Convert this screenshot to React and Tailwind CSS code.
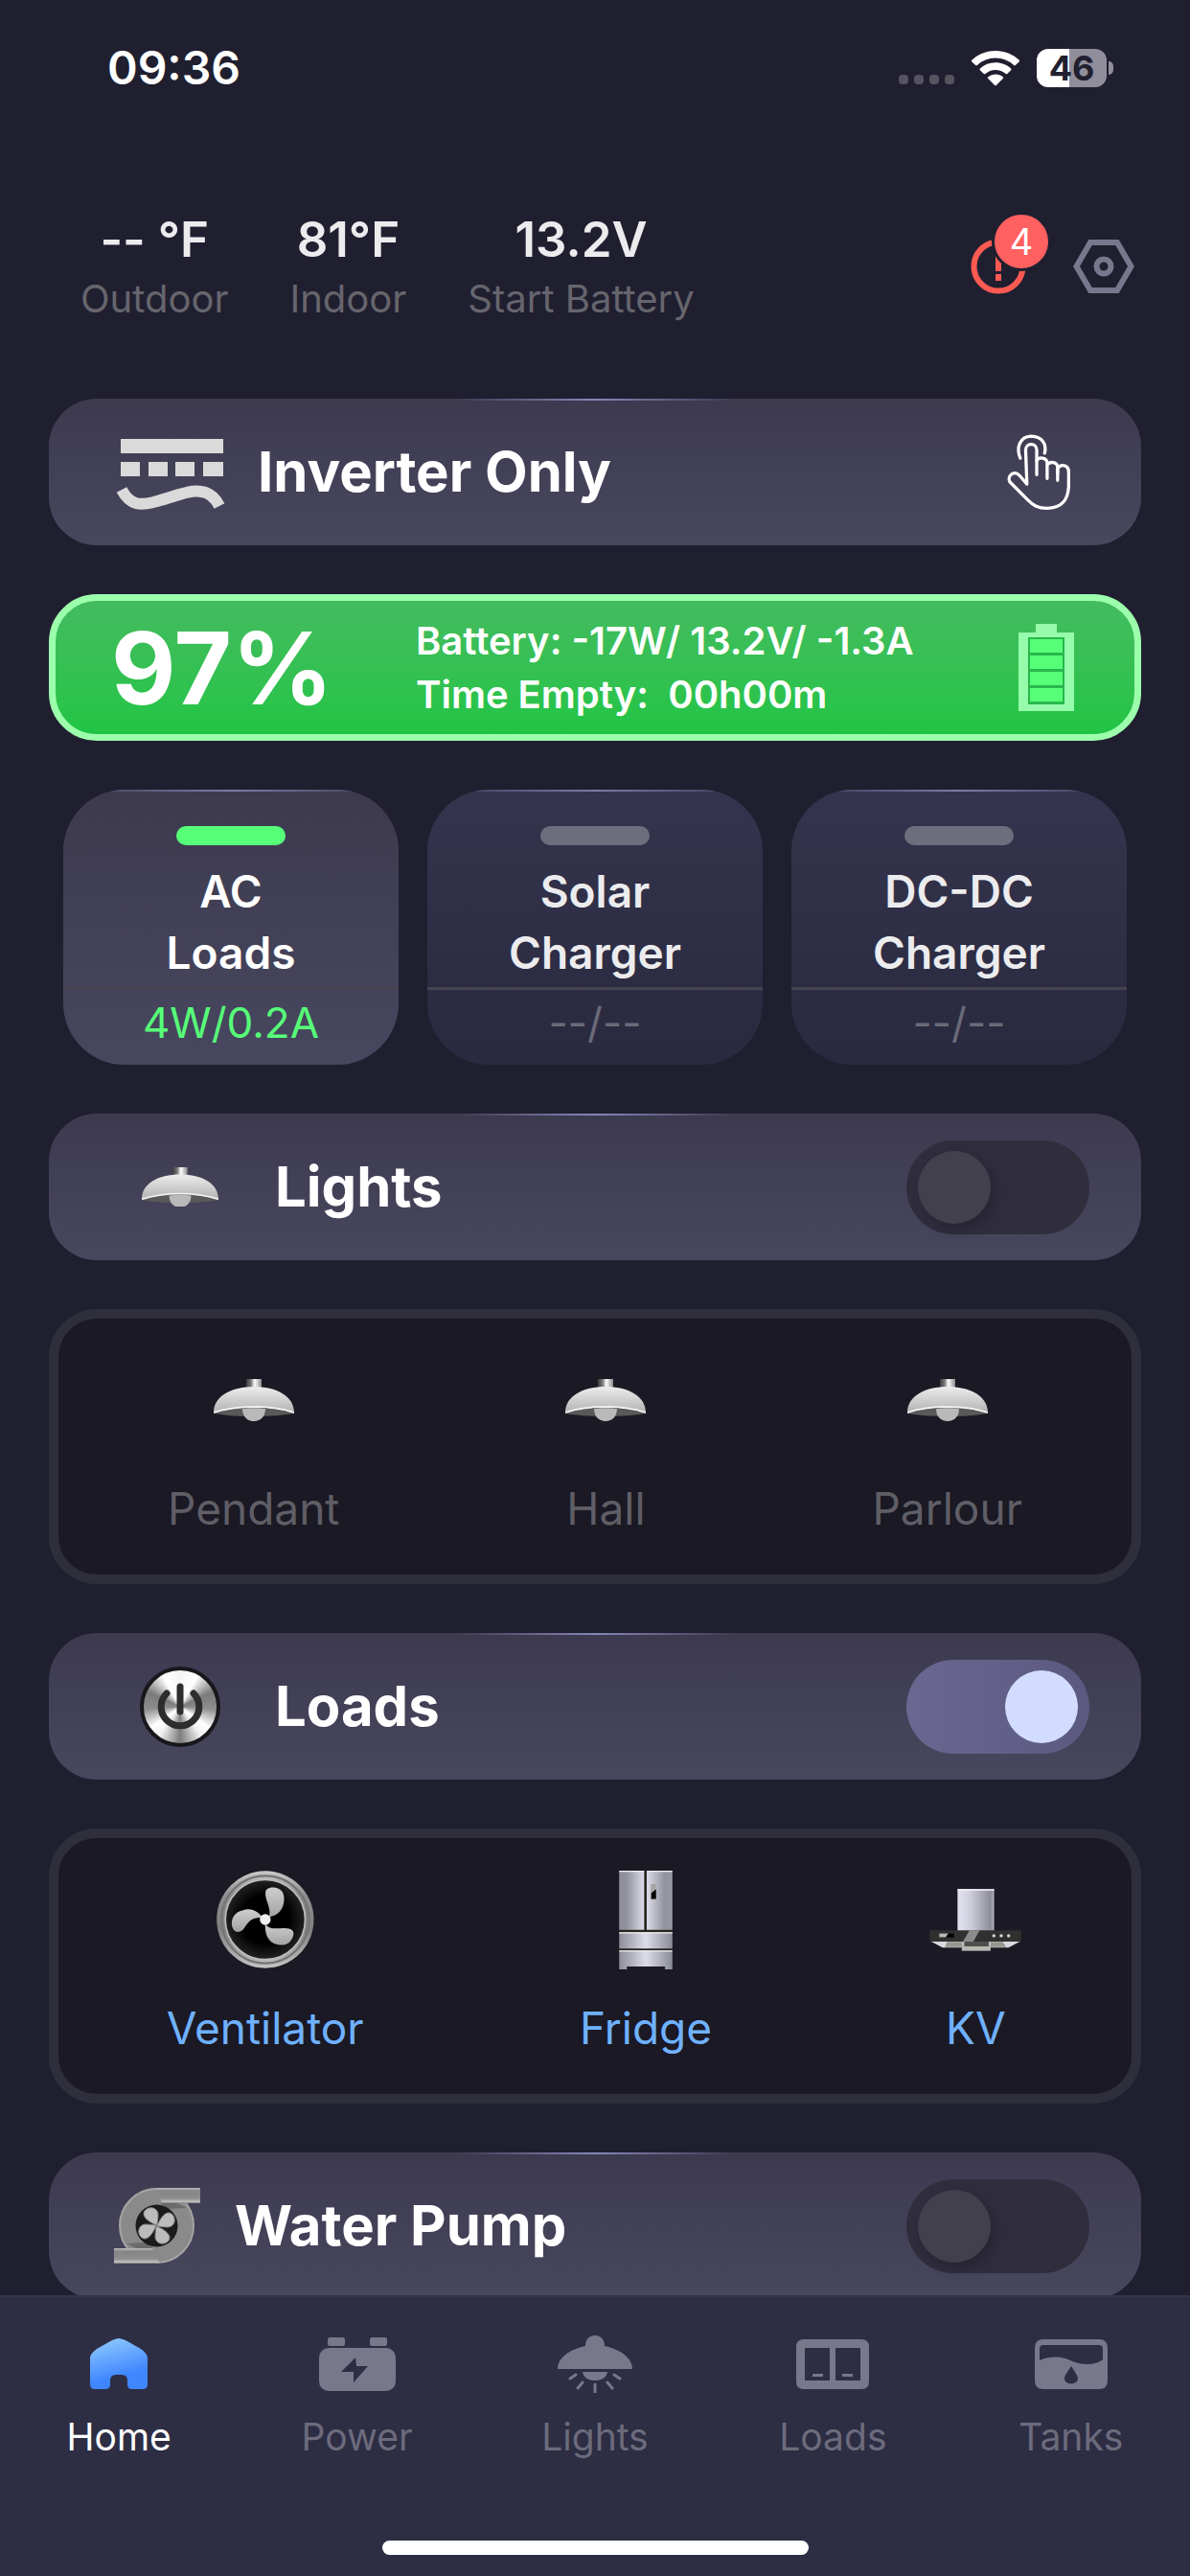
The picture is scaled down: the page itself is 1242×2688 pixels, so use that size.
import { useState } from "react";

const stats = [
  { value: "-- °F", label: "Outdoor" },
  { value: "81°F", label: "Indoor" },
  { value: "13.2V", label: "Start Battery" },
];

const tiles = [
  { lines: ["AC", "Loads"], value: "4W/0.2A", active: true },
  { lines: ["Solar", "Charger"], value: "--/--", active: false },
  { lines: ["DC-DC", "Charger"], value: "--/--", active: false },
];

function WifiIcon() {
  return (
    <svg width="50" height="37" viewBox="0 0 50 37" fill="#fff" aria-hidden="true">
      <path d="M25 0C34.500 0 43.200 3.600 49.600 9.600a1.200 1.200 0 0 1 0 1.800l-3.700 3.700a1.300 1.300 0 0 1-1.800 0A27.600 27.600 0 0 0 25 7.600 27.600 27.600 0 0 0 5.900 15.100a1.300 1.300 0 0 1-1.800 0L.400 11.400a1.200 1.200 0 0 1 0-1.800C6.800 3.600 15.500 0 25 0Z" />
      <path d="M25 12.300c6.200 0 11.800 2.300 16.100 6.200a1.200 1.200 0 0 1 0 1.800l-3.800 3.700a1.300 1.300 0 0 1-1.700 0A15.800 15.800 0 0 0 25 19.900c-4.100 0-7.800 1.600-10.600 4.100a1.300 1.300 0 0 1-1.700 0l-3.800-3.700a1.200 1.200 0 0 1 0-1.800A23.800 23.800 0 0 1 25 12.300Z" />
      <path d="M25 24.400c3 0 5.600 1 7.700 2.800a1.200 1.200 0 0 1 0 1.900l-6.800 6.800a1.300 1.300 0 0 1-1.800 0l-6.800-6.800a1.200 1.200 0 0 1 0-1.900A11.700 11.700 0 0 1 25 24.400Z" />
    </svg>
  );
}

function StatusBar() {
  return (
    <div className="flex h-[142px] items-center justify-between pr-20 pl-[112px]">
      <span className="text-5xl font-semibold text-white">09:36</span>
      <div className="flex items-center gap-[18px]">
        <div className="flex gap-[6px] pt-6">
          <span className="h-[10px] w-[10px] rounded-[4px] bg-[#55545f]" />
          <span className="h-[10px] w-[10px] rounded-[4px] bg-[#55545f]" />
          <span className="h-[10px] w-[10px] rounded-[4px] bg-[#55545f]" />
          <span className="h-[10px] w-[10px] rounded-[4px] bg-[#55545f]" />
        </div>
        <WifiIcon />
        <div className="flex items-center gap-[2px]">
          <span className="flex h-10 w-[73px] items-center justify-center rounded-xl bg-[linear-gradient(90deg,#fff_47%,#8f8e9a_47%)] text-[36px] leading-none font-bold text-[#201f30]">
            46
          </span>
          <span className="h-[14px] w-[5px] rounded-r-full bg-[#8f8e9a]" />
        </div>
      </div>
    </div>
  );
}

function Header() {
  return (
    <header className="flex items-center justify-between pt-[78px] pr-[58px] pb-20 pl-[84px]">
      <dl className="flex gap-[64px]">
        {stats.map((s) => (
          <div key={s.label} className="flex flex-col-reverse gap-2 text-center">
            <dt className="text-[40px] leading-[48px] text-[#66656d]">{s.label}</dt>
            <dd className="text-[51px] leading-[60px] font-semibold text-[#ececee]">{s.value}</dd>
          </div>
        ))}
      </dl>
      <div className="flex items-center gap-[25px]">
        <button type="button" aria-label="Alerts, 4 new" className="relative h-[58px] w-[82px]">
          <svg width="58" height="58" viewBox="0 0 58 58" fill="none" aria-hidden="true">
            <circle cx="29" cy="29" r="25.500" stroke="#ff5a52" strokeWidth="6" />
            <path d="M29 14v20M29 37v7" stroke="#ff5a52" strokeWidth="6" />
          </svg>
          <span className="absolute -top-7 left-[22px] flex h-[62px] w-[62px] items-center justify-center rounded-full border-[3px] border-[#201f30] bg-[#ff6060] text-[38px] leading-none text-white">
            4
          </span>
        </button>
        <button type="button" aria-label="Settings">
          <svg width="64" height="56" viewBox="0 0 64 56" fill="none" stroke="#78778d" strokeWidth="6" aria-hidden="true">
            <path d="M18 3h28l14.500 25L46 53H18L3.500 28Z" />
            <circle cx="32" cy="28" r="7.500" strokeWidth="6" />
          </svg>
        </button>
      </div>
    </header>
  );
}

function TopGlow({ wide }) {
  return (
    <span
      aria-hidden="true"
      className={
        wide
          ? "absolute inset-x-0 top-0 h-[2px] bg-[linear-gradient(90deg,transparent,#7d7ca8,transparent)]"
          : "absolute top-0 left-1/2 h-[2px] w-[290px] -translate-x-1/2 bg-[linear-gradient(90deg,transparent,#8787b8,transparent)]"
      }
    />
  );
}

function InverterIcon() {
  return (
    <svg width="114" height="82" viewBox="0 -6 114 82" fill="#dadada" aria-hidden="true">
      <path d="M5 0h107v15H5zM5 24h20v15H5zM34 24h20v15H34zM62 24h20v15H62zM91 24h21v15H91z" />
      <path d="M6 53c9 17 20 17 37 12 22-6 33-12 46-10 9 1 15 7 19 15" fill="none" stroke="#dadada" strokeWidth="12" />
    </svg>
  );
}

function TapIcon() {
  return (
    <svg width="68" height="82" viewBox="53 39 206 244" fill="none" stroke="#fff" strokeWidth="10" strokeLinecap="round" strokeLinejoin="round" aria-hidden="true">
      <path d="M98 116C84 82 97 47 132 46c36 1 50 26 43 54" />
      <path d="M150 168V90c0-24-35-24-35 0l4 108-23-27c-18-20-42 3-30 21l54 54c18 18 32 28 63 28 42 0 68-24 68-74v-40c0-25-26-27-35-11v37" />
      <path d="M150 124c6-14 33-11 33 8v48M183 138c8-14 33-11 33 8v18" />
    </svg>
  );
}

function BatteryIcon() {
  return (
    <svg width="58" height="91" viewBox="0 0 58 91" aria-hidden="true">
      <path d="M18 0h22v9h18v82H0V9h18Z" fill="#96fbaa" />
      <path d="M10 14h38v70H10z" fill="#28b84c" />
      <path d="M12 16h34v14H12zM12 33h34v14H12zM12 50h34v14H12zM12 67h34v14H12z" fill="#57ff79" />
    </svg>
  );
}

function LampIcon({ width = 84 }) {
  return (
    <svg width={width} viewBox="0 0 84 44" aria-hidden="true">
      <defs>
        <linearGradient id="dome" x1="0" y1="0" x2="0" y2="1">
          <stop offset="0" stopColor="#ececec" />
          <stop offset="1" stopColor="#b3b3b3" />
        </linearGradient>
        <linearGradient id="neck">
          <stop offset="0" stopColor="#3c3c3c" />
          <stop offset="0.3" stopColor="#777" />
          <stop offset="0.55" stopColor="#fff" />
          <stop offset="1" stopColor="#8a8a8a" />
        </linearGradient>
      </defs>
      <path d="M34 0h16v10H34z" fill="url(#neck)" />
      <path d="M1 36C24 28 60 28 83 36 62 40 22 40 1 36Z" fill="#595959" />
      <path d="M0 35C0 18 18 8 42 8s42 10 42 27C60 27 24 27 0 35Z" fill="url(#dome)" />
      <path d="M0 35C24 27 60 27 84 35" fill="none" stroke="#f1f1f1" strokeWidth="2" />
      <path d="M30 31c8-1 16-1 24 0 0 8-5 13-12 13s-12-5-12-13Z" fill="#b9b9b9" />
    </svg>
  );
}

function PowerIcon() {
  return (
    <span className="flex h-[84px] w-[84px] items-center justify-center rounded-full border-[4px] border-[#18181c] bg-[conic-gradient(#f4f4f4,#fff_8%,#7b7b7b_18%,#8d8d8d_26%,#fff_35%,#f2f2f2_40%,#7c7c7c_50%,#f2f2f2_60%,#fff_65%,#8d8d8d_74%,#7b7b7b_82%,#fff_92%,#f4f4f4)]">
      <svg width="60" height="60" viewBox="-30 -30 60 60" fill="none" stroke="#2d2d2f" strokeLinecap="round" aria-hidden="true">
        <path d="M-14-14a19.800 19.800 0 1 0 28 0" strokeWidth="7" />
        <path d="M0-21V5" strokeWidth="7" />
      </svg>
    </span>
  );
}

function PumpIcon() {
  return (
    <svg width="90" height="79" viewBox="0 0 90 79" aria-hidden="true">
      <defs>
        <linearGradient id="pipe" x1="0" y1="0" x2="0" y2="1">
          <stop offset="0" stopColor="#bdbdbd" />
          <stop offset="0.2" stopColor="#858585" />
          <stop offset="0.7" stopColor="#8e8e8e" />
          <stop offset="0.9" stopColor="#c2c2c2" />
          <stop offset="1" stopColor="#777" />
        </linearGradient>
      </defs>
      <circle cx="44.500" cy="39.500" r="38.500" fill="#8a8a8a" stroke="#a4a4a4" strokeWidth="2" />
      <path d="M48 16h18l10 5-20 1ZM41 63H23l-10-5 20-1Z" fill="#6b6b6b" />
      <path d="M43 0h47v16H50z" fill="url(#pipe)" />
      <path d="M0 63h40l8 16H0z" fill="url(#pipe)" />
      <circle cx="44.500" cy="39.500" r="22" fill="#1b1b1b" />
      <g fill="#bcbcbc" stroke="#8a8a8a">
        <path id="vane" d="M45 39C37 36 28 30 32 24c5-6 14-3 14 4 0 5-1 8-1 11Z" />
        <use href="#vane" transform="rotate(90 44.500 39.500)" />
        <use href="#vane" transform="rotate(180 44.500 39.500)" />
        <use href="#vane" transform="rotate(270 44.500 39.500)" />
      </g>
    </svg>
  );
}

function FanIcon() {
  return (
    <svg width="102" height="102" viewBox="136 99 305 306" aria-hidden="true">
      <defs>
        <linearGradient id="rim" x1="0" y1="0" x2="0" y2="1">
          <stop offset="0" stopColor="#c9c9c9" />
          <stop offset="0.25" stopColor="#8f8f8f" />
          <stop offset="0.6" stopColor="#808080" />
          <stop offset="1" stopColor="#c4c4c4" />
        </linearGradient>
        <radialGradient id="well">
          <stop offset="0.6" stopColor="#000" />
          <stop offset="1" stopColor="#222" />
        </radialGradient>
        <linearGradient id="blade" x1="0" y1="0" x2="0" y2="1">
          <stop offset="0" stopColor="#cecece" />
          <stop offset="1" stopColor="#a2a2a2" />
        </linearGradient>
      </defs>
      <circle cx="288" cy="252" r="152" fill="url(#rim)" />
      <circle cx="288" cy="252" r="137" fill="none" stroke="#757575" strokeWidth="7" />
      <circle cx="288" cy="252" r="125" fill="url(#well)" stroke="#bdbdbd" strokeWidth="5" />
      <g fill="url(#blade)">
        <path d="M300 245c9-30-15-55-11-80 4-18 42-18 54 3 10 22 3 67-38 75Z" />
        <path d="M288 266c12 16 32 15 57 13 25-1 37 9 30 26-9 25-30 30-50 25-27-6-39-32-37-64Z" />
        <path d="M274 246c-34 0-39 16-54 36-15 16-34 10-37-14-1-33 22-46 52-48 20 0 33 12 42 22Z" />
      </g>
      <circle cx="288" cy="252" r="17" fill="#efefef" />
    </svg>
  );
}

function FridgeIcon() {
  return (
    <svg width="56" height="103" viewBox="78 68 166 308" aria-hidden="true">
      <defs>
        <linearGradient id="steel">
          <stop offset="0" stopColor="#8d8d99" />
          <stop offset="0.5" stopColor="#dcdde9" />
          <stop offset="1" stopColor="#8a8a96" />
        </linearGradient>
        <linearGradient id="doorL">
          <stop offset="0" stopColor="#8f8f9a" />
          <stop offset="0.3" stopColor="#92929c" />
          <stop offset="1" stopColor="#dcdde9" />
        </linearGradient>
        <linearGradient id="doorR">
          <stop offset="0" stopColor="#dcdde9" />
          <stop offset="0.7" stopColor="#92929c" />
          <stop offset="1" stopColor="#9a9aa5" />
        </linearGradient>
      </defs>
      <path d="M78 68h166v298H78z" fill="#26261f" />
      <path d="M78 69h78v184H78z" fill="url(#doorL)" />
      <path d="M164 69h80v184h-80z" fill="url(#doorR)" />
      <path d="M78 260h166v51H78zM78 317h166v59h-23v-9H102v9H78z" fill="url(#steel)" />
      <path d="M78 70h78M164 70h80M78 262h166M78 319h166" stroke="#f0f0f5" strokeWidth="4" />
      <path d="M177 110h16v48h-16z" fill="#a5a5a5" />
      <path d="M193 126v30h-15v-18Z" fill="#000" />
    </svg>
  );
}

function HoodIcon() {
  return (
    <svg width="96" height="65" viewBox="1050 125 285 194" aria-hidden="true">
      <defs>
        <linearGradient id="flue">
          <stop offset="0" stopColor="#e2e2f0" />
          <stop offset="0.35" stopColor="#cfcfdc" />
          <stop offset="0.9" stopColor="#8d8d98" />
          <stop offset="1" stopColor="#b0b0ba" />
        </linearGradient>
      </defs>
      <path d="M1137 126h114v130h-114z" fill="url(#flue)" />
      <path d="M1137 128h114" stroke="#f6f6fb" strokeWidth="4" />
      <path d="M1052 288h282l-38 20H1090Z" fill="#d9d9df" />
      <path d="M1104 290h48v16h-54ZM1240 290h38l10 16h-48Z" fill="#97968f" />
      <path d="M1150 288h90v30h-90z" fill="#b9b8b2" />
      <path d="M1158 288h76v16h-76z" fill="#4e4e4c" />
      <path d="M1050 254h285v35h-285z" fill="#303030" />
      <path d="M1174 254h32l-20 35h-32Z" fill="#8b8b8b" />
      <path d="M1080 264h46v12h-46z" fill="#000" />
      <path d="M1080 264h28l-8 12h-20Z" fill="#b8b8b8" />
      <g fill="#d6d6d6">
        <circle cx="1250" cy="271" r="5" />
        <circle cx="1273" cy="271" r="5" />
        <circle cx="1296" cy="271" r="5" />
      </g>
    </svg>
  );
}

function Row({ children }) {
  return (
    <section className="relative flex h-[153px] shrink-0 items-center overflow-hidden rounded-[50px] bg-linear-to-b from-[#3d3a50] to-[#47475e]">
      <TopGlow />
      {children}
    </section>
  );
}

function SwitchRow({ id, title, icon, narrow, initial }) {
  const [on, setOn] = useState(initial);
  return (
    <Row>
      <label
        htmlFor={id}
        className={
          narrow
            ? "flex flex-1 items-center gap-9 pl-[68px] text-[58px] font-bold text-white"
            : "flex flex-1 items-center gap-14 pl-[94px] text-[58px] font-bold text-white"
        }
      >
        <span className="flex min-w-[86px] justify-center">{icon}</span>
        {title}
      </label>
      <input
        id={id}
        type="checkbox"
        role="switch"
        checked={on}
        onChange={(e) => setOn(e.target.checked)}
        className="mr-[54px] flex h-[98px] w-[191px] appearance-none items-center rounded-full bg-[#302e3d] px-3 before:h-[76px] before:w-[76px] before:rounded-full before:bg-[#42404d] before:shadow-[4px_6px_14px_rgba(20,18,30,0.35)] before:content-[''] checked:justify-end checked:bg-linear-to-r checked:from-[#6a6791] checked:to-[#5b5980] checked:before:bg-[#d2dcff] checked:before:shadow-none"
      />
    </Row>
  );
}

function Panel({ items, on }) {
  return (
    <ul className="flex h-[287px] shrink-0 justify-around rounded-[50px] border-10 border-[#2e2f3a] bg-[#1a1924] pt-[34px]">
      {items.map((it) => (
        <li key={it.label}>
          <button type="button" className="flex min-w-[100px] flex-col items-center gap-[34px]">
            <span className="flex h-[102px] items-center">{it.icon}</span>
            <span className={on ? "text-[46px] leading-[56px] text-[#6fb1ff]" : "text-[46px] leading-[56px] text-[#5f5e66]"}>
              {it.label}
            </span>
          </button>
        </li>
      ))}
    </ul>
  );
}

function Tile({ tile }) {
  const { active } = tile;
  return (
    <button
      type="button"
      className={
        active
          ? "relative flex h-[287px] flex-col items-center overflow-hidden rounded-[64px] bg-linear-to-b from-[#3d3a4f] to-[#47475f] pt-[38px]"
          : "relative flex h-[287px] flex-col items-center overflow-hidden rounded-[64px] bg-linear-to-b from-[#35344e] to-[#29293f] pt-[38px]"
      }
    >
      <TopGlow wide />
      <span className={active ? "h-5 w-[114px] rounded-full bg-[#57ff79]" : "h-5 w-[114px] rounded-full bg-[#6e6d7c]"} />
      <span className={active ? "mt-4 text-[46px] leading-[64px] font-semibold text-white" : "mt-4 text-[46px] leading-[64px] font-semibold text-[#ececee]"}>
        {tile.lines[0]}
        <br />
        {tile.lines[1]}
      </span>
      <span
        className={
          active
            ? "mt-1 w-full border-t-3 border-[#49444f] pt-1 text-[44px] leading-[60px] text-[#57ff79]"
            : "mt-1 w-full border-t-3 border-[#46434f] pt-1 text-[44px] leading-[60px] text-[#6b6a78]"
        }
      >
        {tile.value}
      </span>
    </button>
  );
}

const navItems = [
  {
    label: "Home",
    icon: (
      <svg width="60" height="54" viewBox="0 0 60 54" aria-hidden="true">
        <defs>
          <linearGradient id="home" x1="0.3" y1="0" x2="0.6" y2="1">
            <stop offset="0" stopColor="#8cc8ff" />
            <stop offset="0.75" stopColor="#3f86ff" />
          </linearGradient>
        </defs>
        <path
          fill="url(#home)"
          d="M30 0c2 0 4 1 7 2l16 9c4 3 7 6 7 10v27q0 5-5 5H44q-5 0-5-5v-4q0-6-6-6h-6q-6 0-6 6v4q0 5-5 5H5q-5 0-5-5V21c0-4 3-7 7-10l16-9c3-1 5-2 7-2Z"
        />
      </svg>
    ),
  },
  {
    label: "Power",
    icon: (
      <svg width="80" height="56" viewBox="0 0 80 56" fill="#78778c" aria-hidden="true">
        <rect x="9" width="18" height="9" rx="2.500" />
        <rect x="53" width="18" height="9" rx="2.500" />
        <rect y="11" width="80" height="45" rx="10" />
        <path d="M38 21 23 36h13v11l15-17H39Z" fill="#2d2d44" />
      </svg>
    ),
  },
  {
    label: "Lights",
    icon: (
      <svg width="78" height="60" viewBox="0 0 78 60" fill="#78778c" aria-hidden="true">
        <path d="M29 11C29 4 33 0 39 0s10 4 10 11c18 4 29 13 29 24H0C0 24 11 15 29 11Z" />
        <path d="M26 38h26c-1 6-6 9-13 9s-12-3-13-9Z" />
        <path d="m19 41-6 4M59 41l6 4M26 49l-5 6M52 49l5 6M39 51v8" stroke="#78778c" strokeWidth="3" strokeLinecap="round" />
      </svg>
    ),
  },
  {
    label: "Loads",
    icon: (
      <svg width="76" height="52" viewBox="0 0 76 52" fill="#78778c" aria-hidden="true">
        <path fillRule="evenodd" d="M8 0h60q8 0 8 8v36q0 8-8 8H8q-8 0-8-8V8q0-8 8-8Zm1 9v34h26V9Zm32 0v34h26V9Z" />
        <path d="M17 36h11v3H17zM48 36h11v3H48z" />
      </svg>
    ),
  },
  {
    label: "Tanks",
    icon: (
      <svg width="76" height="52" viewBox="0 0 76 52" fill="#78778c" aria-hidden="true">
        <path
          fillRule="evenodd"
          d="M9 0h58q9 0 9 9v34q0 9-9 9H9q-9 0-9-9V9q0-9 9-9Zm0 6q-4 0-4 4v12c13-5 23-4 32 0 11 5 26 6 34-1V10q0-4-4-4Zm29 22c-4 6-7 10-7 13 0 7 14 7 14 0 0-3-3-7-7-13Z"
        />
      </svg>
    ),
  },
];

function BottomNav() {
  return (
    <nav className="shrink-0 border-t-2 border-[#34344d] bg-[#2d2d44] pb-[22px]">
      <ul className="grid grid-cols-5 pt-10">
        {navItems.map((item, i) => (
          <li key={item.label}>
            <a href={"#" + item.label.toLowerCase()} aria-current={i === 0 ? "page" : undefined} className="flex flex-col items-center gap-[18px]">
              <span className="flex h-[60px] items-center">{item.icon}</span>
              <span className={i === 0 ? "text-[39px] leading-[56px] text-white" : "text-[39px] leading-[56px] text-[#6c6b7c]"}>{item.label}</span>
            </a>
          </li>
        ))}
      </ul>
      <div className="mx-auto mt-20 h-[15px] w-[445px] rounded-full bg-white" />
    </nav>
  );
}

export default function App() {
  return (
    <div className="flex h-screen flex-col overflow-hidden bg-[#201f30] font-[Inter,'Liberation_Sans',sans-serif]">
      <div className="min-h-0 flex-1 overflow-hidden">
        <StatusBar />
        <Header />
        <main className="flex flex-col gap-[51px] px-[51px]">
          <Row>
            <button type="button" className="flex w-full items-center gap-[34px] pr-[73px] pl-[70px] text-[58px] font-bold text-white">
              <InverterIcon />
              <span className="flex-1 text-left">Inverter Only</span>
              <TapIcon />
            </button>
          </Row>
          <section className="flex h-[153px] shrink-0 items-center rounded-[50px] border-[7px] border-[#9cffac] bg-linear-to-b from-[#43bb5f] to-[#20c545] pr-[63px] pl-[58px] text-white">
            <p className="w-[318px] text-[104px] leading-none font-bold">97%</p>
            <div className="flex-1 text-[40px] leading-[56px] font-semibold">
              <p>Battery: -17W/ 13.2V/ -1.3A</p>
              <p className="whitespace-pre">Time Empty:  00h00m</p>
            </div>
            <BatteryIcon />
          </section>
          <div className="grid grid-cols-3 gap-[30px] px-[15px]">
            {tiles.map((t) => (
              <Tile key={t.lines[0]} tile={t} />
            ))}
          </div>
          <SwitchRow id="lights" title="Lights" icon={<LampIcon width={80} />} initial={false} />
          <Panel
            items={[
              { label: "Pendant", icon: <LampIcon /> },
              { label: "Hall", icon: <LampIcon /> },
              { label: "Parlour", icon: <LampIcon /> },
            ]}
          />
          <SwitchRow id="loads" title="Loads" icon={<PowerIcon />} initial={true} />
          <Panel
            on
            items={[
              { label: "Ventilator", icon: <FanIcon /> },
              { label: "Fridge", icon: <FridgeIcon /> },
              { label: "KV", icon: <HoodIcon /> },
            ]}
          />
          <SwitchRow id="pump" title="Water Pump" icon={<PumpIcon />} narrow initial={false} />
        </main>
      </div>
      <BottomNav />
    </div>
  );
}
